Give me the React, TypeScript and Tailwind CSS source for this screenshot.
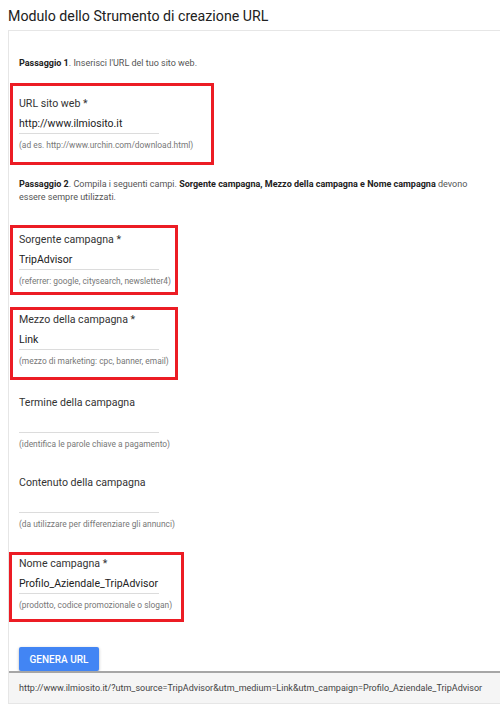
import React from "react";

type FieldProps = {
  label: string;
  value?: string;
  hint: string;
  box?: string; // classes for the red highlight box
  className?: string;
};

// campo in stile material: etichetta, valore, linea, suggerimento
function Field({ label, value, hint, box, className = "" }: FieldProps) {
  return (
    <div className={`relative ${className}`}>
      {box && <div className={`absolute border-[3px] border-[#ec1c24] ${box}`} />}
      <div className="text-[10.6px] leading-[14px] text-[#333]">{label}</div>
      <div className="mt-[6px] h-[14px] text-[10.5px] leading-[14px] text-[#212121]">{value}</div>
      <div className="mt-[2px] h-px w-[140px] bg-[#dcdcdc]" />
      <div className="mt-[5px] text-[8.4px] leading-[12px] text-[#777]">{hint}</div>
    </div>
  );
}

export default function App() {
  const result =
    "http://www.ilmiosito.it/?utm_source=TripAdvisor&utm_medium=Link&utm_campaign=Profilo_Aziendale_TripAdvisor";

  return (
    <div className="h-[704px] w-[500px] overflow-hidden bg-white font-['Roboto',sans-serif]">
      <h1 className="pl-2 pt-[6px] text-[14.2px] leading-[20px] text-[#212121]">
        Modulo dello Strumento di creazione URL
      </h1>

      <div className="ml-2 mt-[4px] border-y border-l border-[#e6e6e6]">
        <div className="px-[10px] pb-0 pt-[25px]">
          <p className="text-[9px] leading-[14px] text-[#555]">
            <b className="font-bold text-[#212121]">Passaggio 1</b>. Inserisci l'URL del tuo sito web.
          </p>

          <div className="mt-[27px]">
            <Field
              label="URL sito web *"
              value="http://www.ilmiosito.it"
              hint="(ad es. http://www.urchin.com/download.html)"
              box="-left-[9px] -top-[14px] h-[82px] w-[204px]"
            />
          </div>

          <p className="mt-[27px] text-[9px] leading-[13px] text-[#555]">
            <b className="font-bold text-[#212121]">Passaggio 2</b>. Compila i seguenti campi.{" "}
            <b className="font-bold text-[#212121]">Sorgente campagna, Mezzo della campagna e Nome campagna</b>{" "}
            devono essere sempre utilizzati.
          </p>

          <div className="mt-[29px] flex flex-col gap-[26px]">
            <Field
              label="Sorgente campagna *"
              value="TripAdvisor"
              hint="(referrer: google, citysearch, newsletter4)"
              box="-left-[9px] -top-[8px] h-[70px] w-[168px]"
            />
            <Field
              label="Mezzo della campagna *"
              value="Link"
              hint="(mezzo di marketing: cpc, banner, email)"
              box="-left-[9px] -top-[6px] h-[73px] w-[168px]"
            />
            <Field
              className="mt-[3px]"
              label="Termine della campagna"
              hint="(identifica le parole chiave a pagamento)"
            />
            <Field label="Contenuto della campagna" hint="(da utilizzare per differenziare gli annunci)" />
            <Field
              className="mt-[1px]"
              label="Nome campagna *"
              value="Profilo_Aziendale_TripAdvisor"
              hint="(prodotto, codice promozionale o slogan)"
              box="-left-[10px] -top-[5px] h-[70px] w-[175px]"
            />
          </div>

          <button className="mt-[36px] flex h-[24px] w-[80px] items-center justify-center rounded-[2px] bg-[#4285f4] text-[10px] font-medium text-white shadow-[0_1px_3px_rgba(0,0,0,0.3)]">
            GENERA URL
          </button>
        </div>

        <div className="whitespace-nowrap border-t-2 border-[#a6a6a6] bg-[#f5f5f5] px-[10px] py-[9px] text-[9px] leading-[12px] text-[#444]">
          {result}
        </div>
      </div>
    </div>
  );
}
